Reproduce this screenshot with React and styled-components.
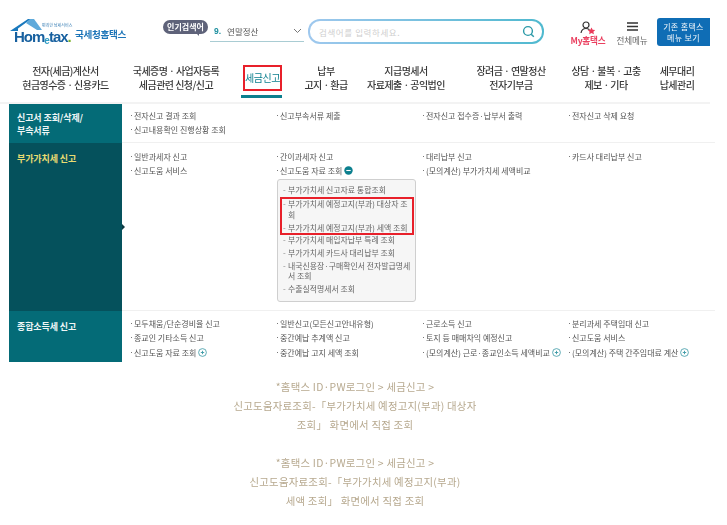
import React from "react";
import styled, { createGlobalStyle } from "styled-components";

const Global = createGlobalStyle`
  html, body { margin: 0; padding: 0; background: #fff; }
  body { font-family: "Noto Sans CJK KR", "Noto Sans", sans-serif; color: #444; }
  * { box-sizing: border-box; }
`;

const Page = styled.div`
  width: 710px;
  filter: blur(0.3px);
`;

const Header = styled.header`
  display: flex;
  align-items: flex-start;
  height: 60px;
  padding: 18px 0 0 10px;
`;

const Logo = styled.div`
  position: relative;
  width: 116px;
  height: 28px;
  margin-right: 37px;
  padding-left: 4px;
  display: flex;
  align-items: flex-start;
  gap: 4px;
`;
const LogoWord = styled.div`
  font-family: "Liberation Sans", sans-serif;
  font-weight: 700;
  font-size: 15px;
  letter-spacing: -1px;
  line-height: 16px;
  color: #17609f;
  width: 57px;
  margin-top: 11px;
  white-space: nowrap;
`;
const LogoE = styled.span`
  color: #2d9cc4;
  font-size: 10px;
  position: relative;
  top: 2px;
`;
const LogoDot = styled.span`
  color: #7cb32a;
`;
const LogoKo = styled.div`
  font-size: 9.6px;
  font-weight: 700;
  color: #1d75b8;
  letter-spacing: -0.35px;
  line-height: 14px;
  margin-top: 9px;
  white-space: nowrap;
`;
const LogoTag = styled.div`
  position: absolute;
  left: 32px;
  top: 5px;
  font-size: 4px;
  line-height: 5px;
  color: #3a7fb5;
  white-space: nowrap;
`;
const LogoRoof = styled.svg`
  position: absolute;
  left: 0;
  top: 0;
`;

const PopularBadge = styled.div`
  position: relative;
  width: 45px;
  height: 14px;
  margin-top: 2px;
  margin-right: 2px;
  border-radius: 7px;
  background: #5e6279;
  color: #fff;
  font-size: 8px;
  font-weight: 700;
  line-height: 14px;
  text-align: center;
  white-space: nowrap;
  &::after {
    content: "";
    position: absolute;
    left: 33px;
    top: 13px;
    border-top: 3px solid #5e6279;
    border-left: 3px solid transparent;
  }
`;

const SelectBox = styled.div`
  width: 94px;
  height: 24px;
  margin-right: 4px;
  padding: 3px 0 0 4px;
  display: flex;
  align-items: center;
  border-bottom: 1px solid #a9ccd3;
  font-size: 8.5px;
  color: #555;
`;
const Rank = styled.span`
  color: #1c8f9f;
  font-weight: 700;
  font-family: "Liberation Sans", sans-serif;
  margin-right: 6px;
`;
const Chevron = styled.svg`
  margin-left: auto;
  margin-right: 2px;
`;

const SearchBox = styled.div`
  width: 236px;
  height: 25px;
  margin-top: 1px;
  margin-right: 25px;
  border-radius: 12px;
  padding: 2px;
  background: linear-gradient(90deg, #9fc8ee, #4fb9cf);
`;
const SearchInner = styled.div`
  height: 100%;
  border-radius: 10px;
  background: #fff;
  display: flex;
  align-items: center;
  justify-content: space-between;
  padding: 0 7px 0 9px;
  font-size: 8.5px;
  letter-spacing: 0.6px;
  color: #cfcfcf;
`;

const IconLink = styled.div`
  width: ${(p) => p.$w}px;
  margin-right: ${(p) => p.$mr}px;
  display: flex;
  flex-direction: column;
  align-items: center;
  padding-top: ${(p) => p.$pt}px;
`;
const IconLabel = styled.div`
  font-size: 8.6px;
  font-weight: ${(p) => p.$weight};
  letter-spacing: -0.2px;
  line-height: 10px;
  margin-top: ${(p) => p.$mt}px;
  color: ${(p) => p.$color};
  white-space: nowrap;
`;

const OldButton = styled.div`
  width: 53px;
  height: 28px;
  border-radius: 3px 0 0 3px;
  background: #0f6db5;
  color: #f0f6fb;
  font-size: 8px;
  letter-spacing: 0.35px;
  line-height: 11px;
  text-align: center;
  padding-top: 3px;
`;

const Nav = styled.nav`
  display: grid;
  grid-template-columns: 9px 113px 108px 64px 64px 96px 114px 76px 66px;
  height: 44px;
  border-bottom: 2px solid #f3f3f3;
`;
const NavItem = styled.div`
  grid-column: ${(p) => p.$col};
  position: relative;
  display: flex;
  flex-direction: column;
  align-items: center;
  padding-top: 4px;
  font-size: 10px;
  font-weight: 500;
  letter-spacing: -0.55px;
  line-height: 14px;
  color: #383838;
  white-space: nowrap;
`;
const ActiveLabel = styled.div`
  width: 39px;
  height: 26px;
  margin: 1px 0 0 1px;
  border: 2px solid #e8202a;
  color: #0b7f8e;
  font-size: 10px;
  font-weight: 400;
  letter-spacing: -0.5px;
  line-height: 22px;
  text-align: center;
`;
const ActiveBar = styled.div`
  position: absolute;
  left: 11px;
  top: 35px;
  width: 41px;
  height: 3px;
  background: #0b7f8e;
`;

const Board = styled.div`
  padding-left: 9px;
`;
const Row = styled.section`
  display: grid;
  grid-template-columns: 113px 1fr;
  min-height: ${(p) => p.$h}px;
`;
const Side = styled.h3`
  position: relative;
  margin: 0;
  padding: ${(p) => p.$pt}px 0 0 8px;
  background: ${(p) => (p.$dark ? "#05515c" : "#046b77")};
  color: ${(p) => (p.$dark ? "#e9dc72" : "#eef6f6")};
  font-size: 9px;
  font-weight: 700;
  letter-spacing: -0.1px;
  line-height: 13px;
`;
const SideArrow = styled.span`
  position: absolute;
  right: -3px;
  top: 81px;
  border-left: 3px solid #0c3a42;
  border-top: 3px solid transparent;
  border-bottom: 3px solid transparent;
`;
const Cols = styled.div`
  display: grid;
  grid-template-columns: repeat(4, 146px);
  padding: ${(p) => p.$pt}px 0 0 9px;
  border-bottom: ${(p) => (p.$last ? "none" : "1px solid #f0f0f0")};
`;
const Col = styled.div`
  display: flex;
  flex-direction: column;
  min-width: 0;
`;
const Item = styled.div`
  display: flex;
  align-items: center;
  height: 14.6px;
  font-size: 8px;
  color: #555;
  white-space: nowrap;
  &::before {
    content: "";
    flex: none;
    width: 1px;
    height: 1px;
    margin-right: 2px;
    background: #777;
  }
`;
const Toggle = styled.svg`
  margin-left: 2px;
  flex: none;
`;
const SubBox = styled.div`
  width: 139px;
  margin-top: 1px;
  padding: 5px 1px 3.5px 2px;
  border: 1px solid #cfcfcf;
  border-radius: 3px;
  background: #f6f6f6;
`;
const SubItem = styled.div`
  position: relative;
  margin: 0 0 2.6px 3px;
  padding-left: 5px;
  font-size: 7.9px;
  line-height: 10.4px;
  color: #666;
  word-break: break-all;
  &::before {
    content: "-";
    position: absolute;
    left: 0;
    color: #888;
  }
`;
const Highlight = styled.div`
  border: 2px solid #e8202a;
  margin: -1px 0 0;
  ${SubItem} { margin-left: 1px; }
  ${SubItem}:last-child { margin-bottom: 0; }
`;

const Note = styled.div`
  padding: 15px 0 0;
  text-align: center;
  font-size: 10.4px;
  line-height: 19px;
  letter-spacing: 0.25px;
  color: #b7a98f;
`;
const NoteBlock = styled.p`
  margin: 0 0 19px;
`;

const Minus = () => (
  <Toggle width="9" height="9" viewBox="0 0 9 9">
    <circle cx="4.5" cy="4.5" r="4.2" fill="#0b7f8e" />
    <path d="M2.3 4.5h4.4" stroke="#fff" strokeWidth="1.1" />
  </Toggle>
);
const Plus = () => (
  <Toggle width="9" height="9" viewBox="0 0 9 9">
    <circle cx="4.5" cy="4.5" r="3.9" fill="#fff" stroke="#3a98a5" strokeWidth="0.8" />
    <path d="M2.8 4.5h3.4M4.5 2.8v3.4" stroke="#3a98a5" strokeWidth="0.9" />
  </Toggle>
);

const nav = [
  [2, "전자(세금)계산서", "현금영수증 · 신용카드"],
  [3, "국세증명 · 사업자등록", "세금관련 신청/신고"],
  [5, "납부", "고지 · 환급"],
  [6, "지급명세서", "자료제출 · 공익법인"],
  [7, "장려금 · 연말정산", "전자기부금"],
  [8, "상담 · 불복 · 고충", "제보 · 기타"],
  [9, "세무대리", "납세관리"],
];

export default function App() {
  return (
    <Page>
      <Global />
      <Header>
        <Logo>
          <LogoRoof width="46" height="20" viewBox="0 0 46 20">
            <path d="M0 13 L18 1 L21 1 L8 10.500 L8 13 L5 13 L3 13 Z" fill="#1a79bd" />
            <path d="M20 1 L24 1 L32 12 L27 12 L16 5 Z" fill="#5faadb" />
          </LogoRoof>
          <LogoTag>편리한 납세서비스</LogoTag>
          <LogoWord>Hom<LogoE>e</LogoE>tax<LogoDot>.</LogoDot></LogoWord>
          <LogoKo>국세청홈택스</LogoKo>
        </Logo>
        <PopularBadge>인기검색어</PopularBadge>
        <SelectBox>
          <Rank>9.</Rank>연말정산
          <Chevron width="9" height="6" viewBox="0 0 9 6">
            <path d="M1 1l3.5 3.5L8 1" fill="none" stroke="#777" strokeWidth="1" />
          </Chevron>
        </SelectBox>
        <SearchBox>
          <SearchInner>
            검색어를 입력하세요.
            <svg width="13" height="13" viewBox="0 0 13 13">
              <circle cx="6" cy="6" r="4.4" fill="none" stroke="#2c9aa8" strokeWidth="1.4" />
              <path d="M9.200 9.200l2.600 2.600" stroke="#2c9aa8" strokeWidth="1.5" />
            </svg>
          </SearchInner>
        </SearchBox>
        <IconLink $w={38} $mr={9} $pt={3}>
          <svg width="16" height="14" viewBox="0 0 16 14">
            <circle cx="6" cy="4" r="3" fill="none" stroke="#333" strokeWidth="1.2" />
            <path d="M1 12c.5-3 2.500-4.500 5-4.500 1.500 0 2.500.5 3.500 1.200" fill="none" stroke="#333" strokeWidth="1.2" />
            <path d="M11.500 6.500l1.200 2.300 2.500.3-1.800 1.700.5 2.500-2.400-1.200-2.300 1.200.4-2.500-1.800-1.700 2.500-.3z" fill="#ea3a5a" />
          </svg>
          <IconLabel $color="#ea4060" $weight={700} $mt={0}>My홈택스</IconLabel>
        </IconLink>
        <IconLink $w={32} $mr={9} $pt={4}>
          <svg width="13" height="9" viewBox="0 0 13 9">
            <path d="M1 1h11M1 4.500h11M1 8h11" stroke="#333" strokeWidth="1.3" />
          </svg>
          <IconLabel $color="#666" $weight={400} $mt={4}>전체메뉴</IconLabel>
        </IconLink>
        <OldButton>기존 홈택스<br />메뉴 보기</OldButton>
      </Header>

      <Nav>
        {nav.slice(0, 2).map(([c, a, b]) => (
          <NavItem key={a} $col={c}><span>{a}</span><span>{b}</span></NavItem>
        ))}
        <NavItem $col={4}>
          <ActiveLabel>세금신고</ActiveLabel>
          <ActiveBar />
        </NavItem>
        {nav.slice(2).map(([c, a, b]) => (
          <NavItem key={a} $col={c}><span>{a}</span><span>{b}</span></NavItem>
        ))}
      </Nav>

      <Board>
        <Row $h={39}>
          <Side $pt={7}>신고서 조회/삭제/<br />부속서류</Side>
          <Cols $pt={4}>
            <Col><Item>전자신고 결과 조회</Item><Item>신고내용확인 진행상황 조회</Item></Col>
            <Col><Item>신고부속서류 제출</Item></Col>
            <Col><Item>전자신고 접수증·납부서 출력</Item></Col>
            <Col><Item>전자신고 삭제 요청</Item></Col>
          </Cols>
        </Row>
        <Row $h={168}>
          <Side $dark $pt={9}>부가가치세 신고<SideArrow /></Side>
          <Cols $pt={6}>
            <Col><Item>일반과세자 신고</Item><Item>신고도움 서비스</Item></Col>
            <Col>
              <Item>간이과세자 신고</Item>
              <Item>신고도움 자료 조회<Minus /></Item>
              <SubBox>
                <SubItem>부가가치세 신고자료 통합조회</SubItem>
                <Highlight>
                  <SubItem>부가가치세 예정고지(부과) 대상자 조회</SubItem>
                  <SubItem>부가가치세 예정고지(부과) 세액 조회</SubItem>
                </Highlight>
                <SubItem>부가가치세 매입자납부 특례 조회</SubItem>
                <SubItem>부가가치세 카드사 대리납부 조회</SubItem>
                <SubItem>내국신용장·구매확인서 전자발급명세서 조회</SubItem>
                <SubItem>수출실적명세서 조회</SubItem>
              </SubBox>
            </Col>
            <Col><Item>대리납부 신고</Item><Item>(모의계산) 부가가치세 세액비교</Item></Col>
            <Col><Item>카드사 대리납부 신고</Item></Col>
          </Cols>
        </Row>
        <Row $h={51}>
          <Side $pt={9}>종합소득세 신고</Side>
          <Cols $pt={5} $last>
            <Col><Item>모두채움/단순경비율 신고</Item><Item>종교인 기타소득 신고</Item><Item>신고도움 자료 조회<Plus /></Item></Col>
            <Col><Item>일반신고(모든신고안내유형)</Item><Item>중간예납 추계액 신고</Item><Item>중간예납 고지 세액 조회</Item></Col>
            <Col><Item>근로소득 신고</Item><Item>토지 등 매매차익 예정신고</Item><Item>(모의계산) 근로·종교인소득 세액비교<Plus /></Item></Col>
            <Col><Item>분리과세 주택임대 신고</Item><Item>신고도움 서비스</Item><Item>(모의계산) 주택 간주임대료 계산<Plus /></Item></Col>
          </Cols>
        </Row>
      </Board>

      <Note>
        <NoteBlock>*홈택스 ID·PW로그인 &gt; 세금신고 &gt;<br />신고도움자료조회-「부가가치세 예정고지(부과) 대상자<br />조회」 화면에서 직접 조회</NoteBlock>
        <NoteBlock>*홈택스 ID·PW로그인 &gt; 세금신고 &gt;<br />신고도움자료조회-「부가가치세 예정고지(부과)<br />세액 조회」 화면에서 직접 조회</NoteBlock>
      </Note>
    </Page>
  );
}
